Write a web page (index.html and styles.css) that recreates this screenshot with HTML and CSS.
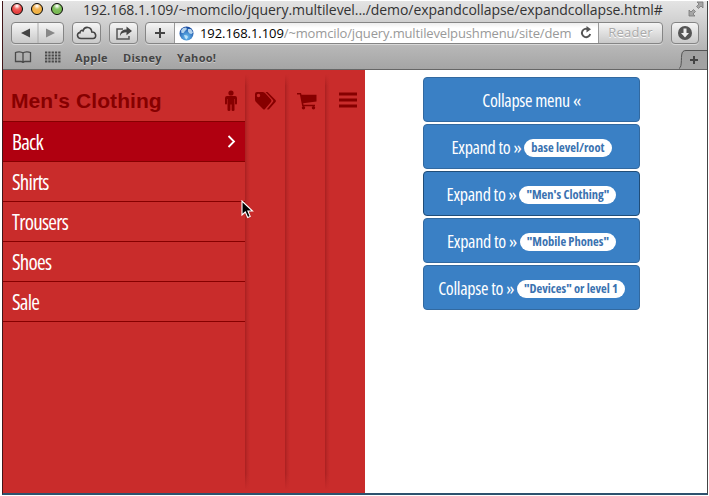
FILE: index.html
```html
<!DOCTYPE html>
<html lang="en">
<head>
<meta charset="utf-8">
<title>expandcollapse</title>
<link rel="stylesheet" href="styles.css">
</head>
<body>
<div class="window">
  <header class="chrome">
    <div class="titlebar">
      <div class="lights"><i class="red"></i><i class="amber"></i><i class="green"></i></div>
      <div class="title">192.168.1.109/~momcilo/jquery.multilevel.../demo/expandcollapse/expandcollapse.html#</div>
      <svg class="full" width="16" height="16" viewBox="0 0 16 16"><path d="M9 1H15V7L13 5 10.500 7.500 8.500 5.500 11 3zM7 15H1V9L3 11 5.500 8.500 7.500 10.500 5 13z" fill="#a5a5a5" stroke="#777" stroke-width=".8"/></svg>
    </div>
    <div class="toolbar">
      <div class="btn nav"><svg width="52" height="20" viewBox="0 0 52 20"><path d="M9 10L18 5.500V14.500z" fill="#444"/><path d="M43 10L34 5.500V14.500z" fill="#888"/><path d="M26 0V20" stroke="#aaa"/></svg></div>
      <div class="btn cloud"><svg width="27" height="20" viewBox="0 0 27 20"><path d="M8 15.500C3.500 15.500 3.500 9.600 7 9.600C7 7.500 9 7 10 7.800C11.500 2.800 18.500 3.500 18.800 9C23.500 8.800 24 15.500 20 15.500z" fill="none" stroke="#444" stroke-width="1.600"/></svg></div>
      <div class="btn share"><svg width="27" height="20" viewBox="0 0 27 20"><path d="M13 6H7V16H19V13" fill="none" stroke="#555" stroke-width="1.500"/><path d="M10 13C10 8 13 6.500 16.500 6.500V3.500L22 8 16.500 12.300V9.300C13.500 9.300 11.500 10 10 13z" fill="#444"/></svg></div>
      <div class="btn address">
        <div class="add"><svg width="29" height="20" viewBox="0 0 29 20"><path d="M14 5V15M9 10H19" stroke="#444" stroke-width="2"/></svg></div>
        <div class="url">
          <svg class="globe" width="15" height="15" viewBox="0 0 15 15"><defs><radialGradient id="g" cx=".5" cy=".75" r=".7"><stop offset="0" stop-color="#6cc3f6"/><stop offset="1" stop-color="#1749a0"/></radialGradient></defs><circle cx="7.500" cy="7.500" r="7" fill="url(#g)"/><path d="M2 4.500L4 2 7 1.500 8 3 6 5 4.500 7 2.500 7zM9 3L12 3 14 6.500 12.500 8 10.500 7.500 9 5.500zM5 9L8 9.500 9 11 7.500 13.500 6 12z" fill="#d4ecfa" opacity=".8"/></svg>
          <span class="host">192.168.1.109</span><span class="path">/~momcilo/jquery.multilevelpushmenu/site/dem</span>
          <svg class="reload" width="14" height="14" viewBox="0 0 14 14"><path d="M9.500 3.500A4.200 4.200 0 1 0 11.200 8" fill="none" stroke="#555" stroke-width="1.900"/><path d="M7.500 0L12 3.300 7.500 6.500z" fill="#555"/></svg>
        </div>
        <div class="reader">Reader</div>
      </div>
      <div class="btn down"><svg width="26" height="20" viewBox="0 0 26 20"><circle cx="13" cy="10" r="7" fill="#555"/><path d="M11.500 5.500H14.500V10H17L13 14.500 9 10H11.500z" fill="#eee"/></svg></div>
    </div>
    <div class="bookmarks">
      <svg class="book" width="18" height="12" viewBox="0 0 18 12"><path d="M9 10.500V2C7.500.6 3.500.6 1.500 1.500V10.500H7C8 10.500 8.500 11 9 11.500 9.500 11 10 10.500 11 10.500H16.500V1.500C14.500.6 10.500.6 9 2" fill="none" stroke="#4a4a4a" stroke-width="1.300"/></svg>
      <svg class="dots" width="16" height="12" viewBox="0 0 16 12"><path d="M0 1.500H16M0 4.500H16M0 7.500H16M0 10.500H16" stroke="#4a4a4a" stroke-width="2" stroke-dasharray="2.300 1"/></svg>
      <span class="b1">Apple</span><span class="b2">Disney</span><span class="b3">Yahoo!</span>
      <div class="newtab"><svg width="28" height="19" viewBox="0 0 28 19"><path d="M0 19C4 17 1 4 4 1.500Q5 .5 7 .5H28V19z" fill="#a2a2a2"/><path d="M0 18.500C4 17 1 4 4 1.500Q5 .5 7 .5H28" fill="none" stroke="#555"/><path d="M15 6V14M11 10H19" stroke="#444" stroke-width="2"/></svg></div>
    </div>
  </header>
  <main class="page">
    <nav class="menu">
      <section class="level open">
        <h2><span>Men's Clothing</span><svg width="14" height="22" viewBox="0 0 14 22"><circle cx="7" cy="3" r="2.600" fill="#860000"/><path d="M3 6H11Q13 6 13 8V13.500Q13 14.500 12 14.500T11 13.500V9H10.500V20Q10.500 21 9 21T7.600 20V14.500H6.400V20Q6.400 21 5 21T3.500 20V9H3V13.500Q3 14.500 2 14.500T1 13.500V8Q1 6 3 6z" fill="#860000"/></svg></h2>
        <ul>
          <li class="back"><span>Back</span><svg width="9" height="13" viewBox="0 0 9 13"><path d="M1.500 1L7 6.500 1.500 12" fill="none" stroke="#fff" stroke-width="1.800"/></svg></li>
          <li><span>Shirts</span></li><li><span>Trousers</span></li><li><span>Shoes</span></li><li><span>Sale</span></li>
        </ul>
      </section>
      <section class="level"><svg width="23" height="20" viewBox="0 0 23 20"><path fill-rule="evenodd" d="M1 3Q1 1 3 1H8.500Q10 1 11 2L17 8.500Q18 10 17 11L11 18Q10 19 9 18L2 11Q1 10 1 8.500zM4.500 2.800A1.700 1.700 0 1 0 4.500 6.200 1.700 1.700 0 1 0 4.500 2.800z" fill="#860000"/><path d="M11.500 1H13.500L21.500 9Q22.500 10 21.500 11L15 18.200Q14 19 13 18L19 10.800Q19.700 10 19 9z" fill="#860000"/></svg></section>
      <section class="level cart"><svg width="20" height="18" viewBox="0 0 20 18"><path d="M0 1H4L4.500 2.800H19.500V9.500L6.200 11.300 6.500 12.800H18V14.300H5.200L2.900 2.500H0z" fill="#860000"/><circle cx="6.500" cy="15.700" r="1.700" fill="#860000"/><circle cx="16.500" cy="15.700" r="1.700" fill="#860000"/></svg></section>
      <section class="level bars"><svg width="18" height="16" viewBox="0 0 18 16"><path d="M0 2H18M0 8H18M0 14H18" stroke="#860000" stroke-width="3"/></svg></section>
    </nav>
    <div class="actions">
      <button><span>Collapse menu «</span></button>
      <button><span>Expand to »</span><b>base level/root</b></button>
      <button class="focus"><span>Expand to »</span><b>"Men's Clothing"</b></button>
      <button><span>Expand to »</span><b>"Mobile Phones"</b></button>
      <button><span>Collapse to »</span><b>"Devices" or level 1</b></button>
    </div>
  </main>
  <svg class="cursor" width="13" height="19" viewBox="0 0 13 19"><path d="M1 1V15L4.300 12 6.700 17.500 9.200 16.400 6.900 11H11.500z" fill="#000" stroke="#fff" stroke-width="1.100"/></svg>
</div>
</body>
</html>
```
FILE: styles.css
```css
* { box-sizing: border-box; }
body { margin: 0; width: 709px; height: 496px; overflow: hidden; background: #fff; font-family: "Open Sans", sans-serif; }
svg { display: block; flex: none; }
.window { position: relative; width: 706px; height: 494px; margin: 1px 0 0 2px; border-left: 1px solid #421518; border-right: 1px solid #444; border-bottom: 2px solid #2d526e; background: #fff; overflow: hidden; }
.chrome { height: 69px; background: linear-gradient(#e4e4e4, #cecece 23px, #b5b5b5 48px, #a4a4a4 69px); border-bottom: 1px solid #666; }
.titlebar { height: 21px; display: flex; align-items: flex-start; position: relative; }
.lights { display: flex; gap: 8px; padding: 2px 0 0 8px; width: 80px; flex: none; }
.lights i { width: 12px; height: 12px; border-radius: 50%; border: 1px solid; }
.red { background: radial-gradient(circle at 50% 20%, #fff 3%, #f2605b 35%, #e43b3b 70%, #f58a80); border-color: #a43b3b; }
.amber { background: radial-gradient(circle at 50% 20%, #fff 3%, #f3b353 35%, #f0b040 70%, #fbe08a); border-color: #a8783a; }
.green { background: radial-gradient(circle at 50% 20%, #fff 3%, #83c261 35%, #76b850 70%, #c0ec9a); border-color: #558343; }
.title { font-size: 14px; line-height: 17px; width: 583px; white-space: nowrap; color: #333; letter-spacing: -.06px; }
.full { margin-left: 22px; }
.toolbar { height: 26px; display: flex; align-items: flex-start; padding-left: 8px; }
.btn { height: 22px; border: 1px solid #858585; border-radius: 4px; background: linear-gradient(#f5f5f5, #c9c9c9); box-shadow: 0 1px #d8d8d8; overflow: hidden; }
.nav { width: 53px; }
.cloud { width: 29px; margin-left: 8px; }
.share { width: 29px; margin-left: 8px; }
.address { display: flex; width: 518px; margin-left: 7px; }
.add { width: 29px; flex: none; border-right: 1px solid #999; }
.url { width: 423px; height: 20px; flex: none; background: linear-gradient(#eee, #fff 5px); display: flex; align-items: center; padding-left: 4px; font-size: 13px; letter-spacing: -.06px; white-space: nowrap; }
.globe { margin-right: 6px; }
.host { color: #000; }
.path { color: #999; width: 285px; letter-spacing: -.14px; }
.reload { margin-left: 10px; }
.reader { flex: 1; border-left: 1px solid #999; color: #aaa; text-shadow: 0 1px #fff; font-size: 13px; line-height: 19px; text-align: center; letter-spacing: .2px; }
.down { width: 28px; margin-left: 8px; }
.bookmarks { display: flex; height: 18px; align-items: center; padding-left: 11px; font-size: 11px; font-weight: 700; color: #444; text-shadow: 0 1px #ccc; }
.dots { margin-left: 13px; }
.b1 { width: 48px; margin-left: 14px; letter-spacing: .3px; }
.b2 { width: 54px; letter-spacing: .3px; }
.b3 { width: 450px; letter-spacing: .3px; }
.newtab { margin: 0 0 -3px auto; align-self: flex-end; }
.page { display: flex; height: 424px; }
.menu { display: flex; width: 362px; background: #c92c2b; flex: none; }
.level { width: 40px; padding-top: 21px; display: flex; justify-content: center; align-items: flex-start; background: linear-gradient(#c92c2b, transparent 12px, transparent 400px, #c92c2b) 0 4px / 6px 416px no-repeat, linear-gradient(90deg, #a82020, #bb2727 2px, #c92c2b 5px) 0 4px / 6px 416px no-repeat; }
.level.open { width: 242px; display: block; padding: 0; background: none; }
.cart { padding: 22px 0 0 4px; }
.bars { padding: 22px 0 0 6px; }
h2 { margin: 0; height: 51px; padding: 11px 7px 0 8px; display: flex; align-items: center; justify-content: space-between; font: 700 21px "Liberation Sans", sans-serif; letter-spacing: .08px; color: #860000; }
ul { list-style: none; margin: 0; padding: 0; border-top: 1px solid #860000; }
li { height: 40px; border-bottom: 1px solid #860000; padding: 1px 9px; display: flex; align-items: center; justify-content: space-between; color: #fff; font-size: 21px; letter-spacing: -.75px; font-stretch: 75%; }
.back { background: #b00010; }
.actions { margin: 7px 0 0 58px; width: 217px; display: flex; flex-direction: column; gap: 2px; }
button { height: 45px; padding: 0; border: 1px solid #3269a0; border-radius: 4px; background: #3a80c5; color: #fff; display: flex; align-items: center; justify-content: center; gap: 3px; font: 18px "Open Sans", sans-serif; font-stretch: 75%; letter-spacing: -.3px; white-space: nowrap; }
.focus { border-color: #204d78; }
b { font-size: 12.5px; letter-spacing: 0; line-height: 18px; height: 18px; margin-top: 3px; padding: 0 7px; border-radius: 9px; background: #fff; color: #3a72b0; }
.cursor { position: absolute; left: 238px; top: 199px; }
```
